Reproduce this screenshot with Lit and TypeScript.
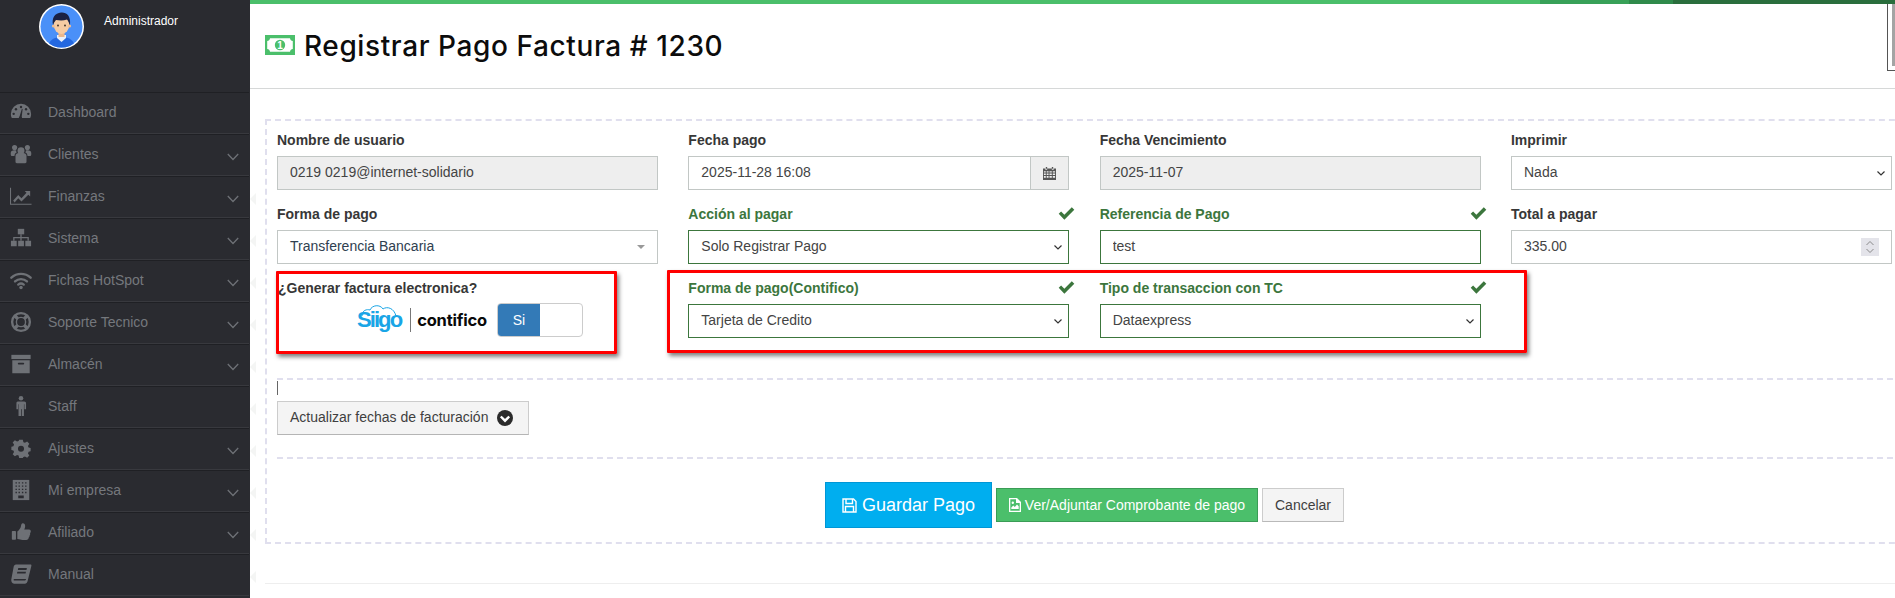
import { LitElement, html, css, svg } from "lit";
import { customElement } from "lit/decorators.js";

const D = "#2a2b30";
const icons: Record<string, unknown> = {
  dashboard: svg`<path d="M2 18.5C.9 17 1 15.5 1 14a11 11 0 0 1 22 0c0 1.5.1 3-1 4.5Z"/><circle cx="12" cy="6.5" r="1.3" fill="${D}"/><circle cx="6.5" cy="9" r="1.3" fill="${D}"/><circle cx="17.5" cy="9" r="1.3" fill="${D}"/><circle cx="4" cy="14" r="1.3" fill="${D}"/><circle cx="20" cy="14" r="1.3" fill="${D}"/><path d="M10.5 16.5 13 8.5l.8.2-1 8.300a1.700 1.700 0 1 1-2.300-.5Z" fill="${D}"/>`,
  users: svg`<circle cx="12" cy="8.500" r="3.800"/><circle cx="5" cy="5" r="2.800"/><circle cx="19" cy="5" r="2.800"/><path d="M6 14c0-2.500 2-3.500 6-3.500s6 1 6 3.500v6.500c0 1-.5 1.500-1.500 1.500h-9C6.500 22 6 21.500 6 20.500Z"/><path d="M.8 11c0-2 1.500-3 4.200-3 .8 0 1.400.1 1.900.4-.3 1 .1 1.400.5 1.900-1.700.6-2.500 2-2.500 4H2.200C1.300 14.300.8 13.500.8 12Z"/><path d="M23.200 11c0-2-1.500-3-4.200-3-.8 0-1.400.1-1.900.4.300 1-.1 1.400-.5 1.900 1.700.6 2.500 2 2.500 4h2.700c.9 0 1.400-.8 1.400-2.300Z"/>`,
  chart: svg`<path d="M.5 3v18h23" fill="none" stroke="currentColor" stroke-width="1.300"/><path d="M3.500 17 9 11l3.500 3.500L18 8.500 16 6.500h6v6l-2-2-7.500 7.500L9 14.500 5 19Z"/>`,
  sitemap: svg`<rect x="8.500" y="2" width="7" height="6"/><rect x="1" y="15" width="6.300" height="6"/><rect x="8.900" y="15" width="6.300" height="6"/><rect x="16.700" y="15" width="6.300" height="6"/><path d="M11.300 8h1.400v3H20.500v4h-1.400v-2.700h-6.400V15h-1.400v-2.700H4.900V15H3.500v-4h7.800Z"/>`,
  wifi: svg`<g fill="none" stroke="currentColor" stroke-linecap="round" stroke-width="2.600"><path d="M1.500 9.500C7.500 4 16.500 4 22.500 9.500"/><path d="M5.500 13.500c3.700-3.300 9.300-3.300 13 0"/><path d="M9 17c1.800-1.400 4.200-1.400 6 0"/></g><circle cx="12" cy="20.300" r="1.900"/>`,
  ring: svg`<circle cx="12" cy="12" r="9.700" fill="none" stroke="currentColor" stroke-width="2.600"/><circle cx="12" cy="12" r="5" fill="none" stroke="currentColor" stroke-width="1.500"/><path d="M5 5l3.500 3.500M19 5l-3.500 3.500M5 19l3.500-3.500M19 19l-3.500-3.500" stroke="currentColor" stroke-width="3.600"/>`,
  archive: svg`<rect x="1.500" y="2" width="21" height="4.600"/><path d="M2.500 8h19v14h-19Zm7 2.500a.8.8 0 0 0 0 2h5a.8.8 0 0 0 0-2Z" fill-rule="evenodd"/>`,
  male: svg`<circle cx="12" cy="3.500" r="2.500"/><path d="M8.500 7h7c1.300 0 2 .8 2 2v6.500h-1.800V10h-.5v13h-2.300v-7.500h-.8V23H9.300V10h-.5v5.500H7V9c0-1.200.7-2 1.500-2Z"/>`,
  cog: svg`<path fill-rule="evenodd" d="M10 3h4l.6 2.700 1.700.7 2.400-1.500 2.400 2.400-1.500 2.400.7 1.700 2.200.6v3.600l-2.200.6-.7 1.700 1.500 2.400-2.400 2.400-2.400-1.500-1.700.7L14 23h-4l-.6-2.700-1.700-.7-2.400 1.500-2.400-2.400 1.500-2.400-.7-1.700L1.500 14.200v-3.600l2.200-.6.7-1.700-1.500-2.400 2.400-2.400 2.400 1.500 1.700-.7ZM12 9.500a3.300 3.300 0 1 0 0 6.600 3.300 3.300 0 0 0 0-6.600Z"/>`,
  building: svg`<path d="M3 1h18v22H3Z"/><g fill="${D}"><path d="M6 3.500h1.500V5H6zM9.300 3.500h1.500V5H9.300zM13 3.500h1.500V5H13zM16.500 3.500H18V5h-1.500zM6 7h1.500v1.500H6zM9.300 7h1.500v1.500H9.300zM13 7h1.500v1.500H13zM16.500 7H18v1.500h-1.500zM6 10.500h1.500V12H6zM9.300 10.500h1.500V12H9.300zM13 10.500h1.500V12H13zM16.500 10.500H18V12h-1.500zM6 14h1.500v1.500H6zM9.300 14h1.500v1.500H9.300zM13 14h1.500v1.500H13zM16.500 14H18v1.500h-1.500zM9 18h6v3H9z"/></g>`,
  thumb: svg`<rect x="2" y="11" width="4.500" height="9.500" rx=".8"/><path d="M8 11.500c2-1.500 3.500-3.500 4-6 .2-1.200.5-3 2-3 2 0 2.800 2 2.500 3.800-.1 1-.6 2-1 3h5.300c1.300 0 1.900 1 1.900 2 0 .9-.3 1.500-.8 2 .3 1 .1 2-.6 2.600.1 1-.2 1.800-1 2.300 0 1.500-1 2.400-2.600 2.400h-4c-2 0-3-1-5.700-1Z"/>`,
  book: svg`<path fill-rule="evenodd" d="M6.500 1.500H22.800c.7.300.7 1 .5 1.700L19.500 18.500c-.4 2.300-1.500 4-3.500 4H4.500C2.300 22.500 1 20 1.500 17.500L4 4C4.400 2.500 5.200 1.500 6.500 1.500ZM9 5.500 8.600 7.500H18l.4-2ZM8 9.500l-.4 2H17l.4-2ZM4.800 17.500c-.5 0-.8.3-.9.8-.1.600.3.900 1 .9h11.200c.6 0 1-.3 1.200-.9l.2-.8Z"/>`,
};

const NAV: [string, string, boolean, boolean][] = [
  ["dashboard", "Dashboard", false, false],
  ["users", "Clientes", true, false],
  ["chart", "Finanzas", true, true],
  ["sitemap", "Sistema", true, true],
  ["wifi", "Fichas HotSpot", true, true],
  ["ring", "Soporte Tecnico", true, true],
  ["archive", "Almacén", true, true],
  ["male", "Staff", false, true],
  ["cog", "Ajustes", true, true],
  ["building", "Mi empresa", true, true],
  ["thumb", "Afiliado", true, true],
  ["book", "Manual", false, true],
];

const check = html`<svg class="check" viewBox="0 0 18 14"><path d="M.6 7.400 3.200 4.800 6.700 8.300 14.700.4 17.400 3 6.700 13.700Z"/></svg>`;
const chevSel = html`<svg class="sc" viewBox="0 0 8 5"><path d="M.5.5 4 4 7.500.5"/></svg>`;

@customElement("app-root")
export class AppRoot extends LitElement {
  static styles = css`
    :host { display: block; position: relative; width: 1895px; height: 598px; overflow: hidden; background: #fff; font-family: "Liberation Sans", Arial, sans-serif; color: #333; }
    * { box-sizing: border-box; }
    .page { display: flex; height: 598px; }
    .side { width: 250px; flex: none; background: #2a2b30; }
    .user { height: 92px; display: flex; align-items: flex-start; padding: 4px 0 0 39px; gap: 20px; }
    .avatar { width: 45px; height: 45px; flex: none; display: block; }
    .uname { color: #fff; font-size: 12px; line-height: 14px; padding-top: 10px; }
    .item { position: relative; height: 42px; display: flex; align-items: center; padding: 0 10px 2px 10px; border-top: 1px solid #1f2024; border-bottom: 1px solid #38393e; margin-right: 1px; color: #75787d; font-size: 14px; }
    .ico { width: 22px; height: 22px; flex: none; margin-right: 16px; fill: #6e7176; color: #6e7176; }
    .chev { width: 12px; height: 8px; margin-left: auto; margin-top: 5px; fill: none; stroke: #6e7176; stroke-width: 1.3; }
    .tri { position: absolute; left: 250px; top: 16px; width: 0; height: 0; border-style: solid; border-width: 6px 6px 6px 0; border-color: transparent #f4f5f4 transparent transparent; }
    .main { flex: 1; min-width: 0; overflow: hidden; position: relative; }
    .bar { display: flex; height: 4px; }
    .bar div:nth-child(1) { width: 1290px; background: #4bbf6b; }
    .bar div:nth-child(2) { width: 89px; background: #38a158; }
    .bar div:nth-child(3) { width: 44px; background: #2f8a4b; }
    .bar div:nth-child(4) { flex: 1; background: #2a6e3d; }
    .head { height: 85px; border-bottom: 1px solid #d6d8d8; display: flex; align-items: center; gap: 9px; padding: 0 0 0 15px; }
    .money { width: 30px; height: 20px; flex: none; margin-bottom: 2px; }
    h1 { margin: 0; font: 500 28px/34px Inter, sans-serif; color: #0c0c0c; letter-spacing: .6px; white-space: nowrap; }
    .box { width: 1670px; margin: 30px 0 0 15px; height: 425px; border: 2px dashed #e0dfee; padding: 9px 0 0 10px; }
    .grid { display: grid; grid-template-columns: repeat(4, 381px); column-gap: 30.33px; row-gap: 14px; }
    .f { position: relative; }
    label { display: block; font-size: 14px; font-weight: 700; line-height: 20px; margin-bottom: 6px; color: #373737; white-space: nowrap; }
    .ok label { color: #3c763d; }
    .check { position: absolute; right: -6px; top: 3px; width: 17px; height: 13px; fill: #3c763d; }
    .ctl { display: block; width: 100%; height: 34px; border: 1px solid #c2c7c5; border-radius: 0; padding: 5px 12px 7px; font: 14px "Liberation Sans", Arial, sans-serif; color: #444; background: #fff; outline: none; }
    .ok .ctl { border-color: #3c763d; }
    .ctl[disabled] { background: #eee; opacity: 1; color: #444; }
    .sel { display: flex; align-items: center; justify-content: space-between; padding-right: 6px; line-height: 20px; }
    .sc { width: 8px; height: 5px; flex: none; margin-top: 2px; fill: none; stroke: #333; stroke-width: 1.2; }
    .ig { display: flex; }
    .ig .ctl { flex: 1; min-width: 0; border-right: 0; }
    .addon { width: 39px; height: 34px; flex: none; background: #eee; border: 1px solid #c2c7c5; display: flex; align-items: center; justify-content: center; }
    .addon svg { width: 13px; height: 13px; fill: #555; }
    .s2 { display: flex; align-items: center; justify-content: space-between; color: #2f4050; padding-right: 12px; line-height: 20px; }
    .s2 i { width: 0; height: 0; margin-top: 2px; border-style: solid; border-width: 4px 4px 0; border-color: #999 transparent transparent; }
    .num { position: relative; }
    .spin { position: absolute; right: 13px; top: 8px; width: 18px; height: 18px; background: #e4e4ea; }
    .spin svg { display: block; width: 18px; height: 18px; fill: none; stroke: #8a8a8a; stroke-width: 1; }
    .gen label { margin: 0 0 5px 1px; }
    .logos { display: flex; align-items: center; justify-content: flex-end; padding-right: 75px; height: 34px; }
    .siigo { position: relative; font: 700 22px/34px "Liberation Sans", sans-serif; letter-spacing: -1.9px; color: #19a5e6; padding-right: 2px; }
    .cloud { position: absolute; left: 2px; top: 0; width: 38px; height: 14px; fill: none; stroke: #19a5e6; stroke-width: 1; }
    .sep { width: 1px; height: 24px; background: #777; margin: 0 6px 0 7px; }
    .cont { font: 700 16.5px/34px Inter, sans-serif; color: #0a0a0a; letter-spacing: -.2px; margin-right: 10px; }
    .sw { width: 86px; height: 34px; border: 1px solid #ccc; border-radius: 4px; overflow: hidden; flex: none; display: flex; background: #fff; }
    .sw b { width: 42px; background: #337ab7; color: #fff; font: 14px/32px "Liberation Sans", sans-serif; text-align: center; }
    hr { border: 0; border-top: 2px dashed #e0dfee; margin: 0; }
    .h1 { margin-top: 40px; }
    .caret { width: 1px; height: 14px; background: #666; margin-top: 1px; }
    .btn { display: inline-flex; align-items: center; justify-content: center; height: 34px; border: 1px solid #ccc; font: 14px "Liberation Sans", sans-serif; white-space: nowrap; }
    .upd { display: flex; width: 252px; margin-top: 6px; background: #f4f4f4; color: #3f3f3f; border-bottom-color: #b5b5b5; gap: 9px; justify-content: flex-start; padding: 0 0 2px 12px; }
    .upd svg { width: 16px; height: 16px; flex: none; margin-top: 2px; }
    .h2 { margin-top: 22px; }
    .acts { display: flex; align-items: center; gap: 4px; padding: 23px 0 0 548px; }
    .save { width: 167px; height: 46px; background: #00aeef; border-color: #0096d6; color: #fff; font-size: 18px; gap: 5px; }
    .save svg { width: 15px; height: 15px; fill: none; stroke: #fff; stroke-width: 1.4; }
    .att { width: 262px; background: #4bbf6b; border-color: #3a9c56; color: #fff; gap: 4px; }
    .att svg { width: 12px; height: 14px; }
    .can { width: 82px; background: #f4f4f4; color: #3f3f3f; border-bottom-color: #b9b9b9; }
    .foot { margin: 39px 0 0 15px; border-top: 1px solid #eee; }
    .scroll { position: absolute; right: 0; top: 4px; width: 8px; height: 67px; border: 1px solid #555; border-width: 0 0 1px 1px; background: #fff; padding: 0 0 4px 4px; }
    .scroll div { height: 100%; background: #a4a4a4; }
    .mark { position: absolute; border: 3px solid #f00; box-shadow: 2px 3px 4px rgba(0,0,0,.5); border-radius: 1px; }
    .m1 { left: 276px; top: 271px; width: 341px; height: 83px; }
    .m2 { left: 667px; top: 270px; width: 860px; height: 83px; }
  `;

  render() {
    return html`
      <div class="page">
        <aside class="side">
          <div class="user">
            <svg class="avatar" viewBox="0 0 45 45">
              <defs><clipPath id="av"><circle cx="22.500" cy="22.500" r="21"/></clipPath></defs>
              <circle cx="22.500" cy="22.500" r="22.500" fill="#fff"/>
              <g clip-path="url(#av)">
                <rect width="45" height="45" fill="#4a90f8"/>
                <path d="M9 45c0-8 5-12 13.500-12S36 37 36 45Z" fill="#2468e0"/>
                <path d="M18 31h9v3l-4.500 4-4.500-4Z" fill="#e8f0fb"/>
                <rect x="19.500" y="26" width="6" height="7" fill="#eab78d"/>
                <ellipse cx="22.500" cy="21" rx="7.800" ry="9" fill="#f6cba3"/>
                <circle cx="14.500" cy="22" r="1.600" fill="#f0bd93"/><circle cx="30.500" cy="22" r="1.600" fill="#f0bd93"/>
                <path d="M14 21c-1.500-7 2-12 8-12.500 5-.5 10 2.500 9 12.500-1-1.500-1.500-4-3-5.500-4 1.500-8 1-11 .5-1.500 1.500-2 3-3 5Z" fill="#1b2244"/>
                <circle cx="19" cy="21.500" r=".9" fill="#3a2a20"/><circle cx="26" cy="21.500" r=".9" fill="#3a2a20"/>
              </g>
            </svg>
            <div class="uname">Administrador</div>
          </div>
          ${NAV.map(([ic, label, chev, tri]) => html`
            <div class="item">
              <svg class="ico" viewBox="0 0 24 24">${icons[ic]}</svg>
              <span>${label}</span>
              ${chev ? html`<svg class="chev" viewBox="0 0 12 8"><path d="M.8 1 6 6.500 11.200 1"/></svg>` : ""}
              ${tri ? html`<span class="tri"></span>` : ""}
            </div>`)}
        </aside>
        <main class="main">
          <div class="bar"><div></div><div></div><div></div><div></div></div>
          <div class="head">
            <svg class="money" viewBox="0 0 30 20">
              <path fill-rule="evenodd" fill="#4bbf6b" d="M0 0h30v20H0ZM5 3.200c0 1.500-1.500 2.800-2.800 2.800v8c1.300 0 2.800 1.300 2.800 2.800h20c0-1.500 1.500-2.800 2.800-2.800V6c-1.300 0-2.800-1.300-2.800-2.800Z"/>
              <circle cx="15" cy="10" r="5.200" fill="#4bbf6b"/>
              <text x="15" y="13.500" font-size="10" font-weight="700" text-anchor="middle" fill="#fff" font-family="Liberation Sans">1</text>
            </svg>
            <h1>Registrar Pago Factura # 1230</h1>
          </div>
          <div class="box">
            <div class="grid">
              <div class="f"><label>Nombre de usuario</label><input class="ctl" disabled value="0219 0219@internet-solidario"></div>
              <div class="f"><label>Fecha pago</label>
                <div class="ig"><input class="ctl" value="2025-11-28 16:08">
                  <span class="addon"><svg viewBox="0 0 14 14"><path fill-rule="evenodd" d="M3 0h1.500v2H3ZM9.500 0H11v2H9.500ZM.5 1.500h2V3h2V1.500h5V3h2V1.500h2.500V14H0V1.500ZM1 4.500V6h2V4.500Zm3 0V6h2V4.500Zm3 0V6h2.500V4.500Zm3.500 0V6H13V4.500ZM1 7v1.700h2V7Zm3 0v1.700h2V7Zm3 0v1.700h2.500V7Zm3.500 0v1.700H13V7ZM1 9.700V11.500h2V9.700Zm3 0V11.500h2V9.700Zm3 0V11.500h2.500V9.700Zm3.500 0V11.500H13V9.700Z"/></svg></span>
                </div>
              </div>
              <div class="f"><label>Fecha Vencimiento</label><input class="ctl" disabled value="2025-11-07"></div>
              <div class="f"><label>Imprimir</label><div class="ctl sel"><span>Nada</span>${chevSel}</div></div>

              <div class="f"><label>Forma de pago</label><div class="ctl s2"><span>Transferencia Bancaria</span><i></i></div></div>
              <div class="f ok"><label>Acción al pagar</label>${check}<div class="ctl sel"><span>Solo Registrar Pago</span>${chevSel}</div></div>
              <div class="f ok"><label>Referencia de Pago</label>${check}<input class="ctl" value="test"></div>
              <div class="f"><label>Total a pagar</label>
                <div class="num"><input class="ctl" value="335.00">
                  <span class="spin"><svg viewBox="0 0 18 18"><path d="M5.500 7 9 3.500 12.500 7M5.500 11 9 14.500 12.500 11"/></svg></span>
                </div>
              </div>

              <div class="f gen"><label>¿Generar factura electronica?</label>
                <div class="logos">
                  <span class="siigo"><svg class="cloud" viewBox="0 0 38 14"><path d="M3 13C3 7 8 6 11 7 13 2 21 1 24 6 28 3 35 5 37 13"/></svg>Siigo</span>
                  <span class="sep"></span>
                  <span class="cont">contifico</span>
                  <span class="sw"><b>Si</b></span>
                </div>
              </div>
              <div class="f ok"><label>Forma de pago(Contifico)</label>${check}<div class="ctl sel"><span>Tarjeta de Credito</span>${chevSel}</div></div>
              <div class="f ok"><label>Tipo de transaccion con TC</label>${check}<div class="ctl sel"><span>Dataexpress</span>${chevSel}</div></div>
            </div>
            <hr class="h1">
            <div class="caret"></div>
            <div class="btn upd">Actualizar fechas de facturación
              <svg viewBox="0 0 16 16"><circle cx="8" cy="8" r="8" fill="#2b2b2b"/><path d="M3.800 6.500 8 10.700l4.200-4.200" fill="none" stroke="#fff" stroke-width="2.400"/></svg>
            </div>
            <hr class="h2">
            <div class="acts">
              <div class="btn save"><svg viewBox="0 0 15 15"><path d="M1 1h10.500L14 3.500V14H1Z"/><path d="M4 1v4.500h6.500V1M3.500 14V8.500h8V14"/></svg>Guardar Pago</div>
              <div class="btn att"><svg viewBox="0 0 12 14"><path fill="#fff" fill-rule="evenodd" d="M0 0h8l4 4v10H0Zm1.300 1.300v11.400h9.400V5H7V1.300ZM2.300 11V9.500l2-2 1.500 1.500L8 6.500l1.700 1.800V11Zm1.500-7.500a1.200 1.200 0 1 1 0 2.400 1.200 1.200 0 0 1 0-2.400Z"/></svg>Ver/Adjuntar Comprobante de pago</div>
              <div class="btn can">Cancelar</div>
            </div>
          </div>
          <div class="foot"></div>
          <div class="scroll"><div></div></div>
        </main>
      </div>
      <div class="mark m1"></div>
      <div class="mark m2"></div>
    `;
  }
}
